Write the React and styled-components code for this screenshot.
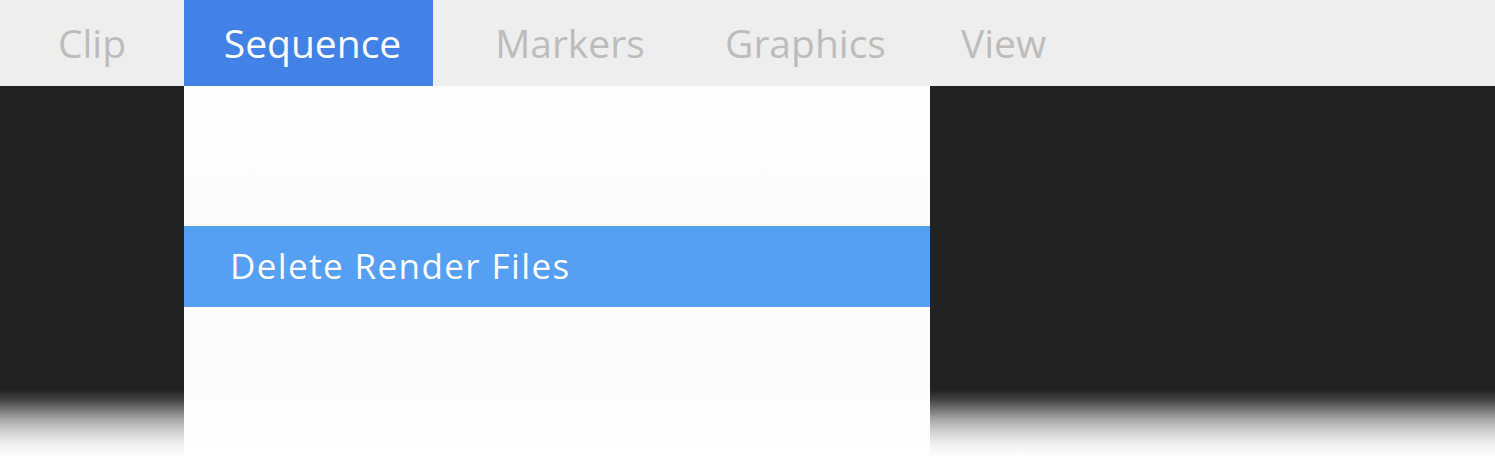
import React from "react";
import styled, { createGlobalStyle } from "styled-components";

const GlobalStyle = createGlobalStyle`
  html, body {
    margin: 0;
    padding: 0;
    background: #ffffff;
  }
  body {
    font-family: "Open Sans", "Noto Sans", sans-serif;
  }
`;

const Page = styled.div`
  width: 1495px;
  height: 476px;
  display: flex;
  flex-direction: column;
  overflow: hidden;
`;

const MenuBar = styled.div`
  height: 86px;
  display: flex;
  background-color: #eeeeee;
`;

const MenuItem = styled.div`
  width: ${(p) => p.w}px;
  display: flex;
  align-items: center;
  justify-content: center;
  font-size: 39px;
  letter-spacing: 0;
  color: ${(p) => (p.active ? "#ffffff" : "#bcbcbc")};
  background-color: ${(p) => (p.active ? "#4282e6" : "transparent")};
  padding: 0 0 2px ${(p) => (p.active ? 8 : 0)}px;
  box-sizing: border-box;
`;

const Body = styled.div`
  flex: 1;
  display: grid;
  grid-template-columns: 184px 746px 1fr;
`;

const fade = (from) => `linear-gradient(
  to bottom,
  ${from} 0px,
  ${from} 304px,
  #444444 314px,
  #777777 324px,
  #aaaaaa 334px,
  #cccccc 344px,
  #eeeeee 357px,
  #ffffff 371px
)`;

const Backdrop = styled.div`
  background: ${fade("#222222")};
`;

const Dropdown = styled.div`
  display: flex;
  flex-direction: column;
  padding-top: 140px;
  background: linear-gradient(to bottom, #fdfdfd 0px, #fcfcfc 300px, #ffffff 371px);
`;

const DropdownItem = styled.div`
  height: 81px;
  display: flex;
  align-items: center;
  padding-left: 46px;
  font-size: 35px;
  letter-spacing: 1.4px;
  color: #ffffff;
  background-color: ${(p) => (p.highlighted ? "#55a0f2" : "transparent")};
  padding-bottom: 2px;
  box-sizing: border-box;
`;

const menu = [
  { label: "Clip", w: 184 },
  { label: "Sequence", w: 249, active: true },
  { label: "Markers", w: 274 },
  { label: "Graphics", w: 197 },
  { label: "View", w: 199 },
];

export default function App() {
  return (
    <>
      <GlobalStyle />
      <Page>
        <MenuBar>
          {menu.map((m) => (
            <MenuItem key={m.label} w={m.w} active={m.active}>
              {m.label}
            </MenuItem>
          ))}
        </MenuBar>
        <Body>
          <Backdrop />
          <Dropdown>
            <DropdownItem highlighted>Delete Render Files</DropdownItem>
          </Dropdown>
          <Backdrop />
        </Body>
      </Page>
    </>
  );
}
